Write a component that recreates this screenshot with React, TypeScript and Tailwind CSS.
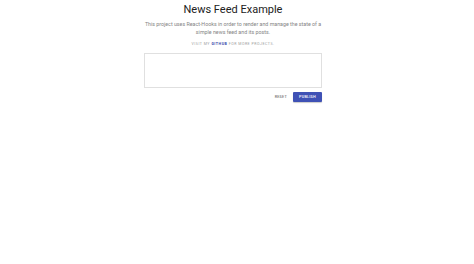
import React from 'react';

export default function App() {
  return (
    <div
      className="min-h-screen w-full bg-white pr-[8px]"
      style={{ fontFamily: 'Roboto, "Liberation Sans", sans-serif' }}
    >
      <div className="mx-auto flex w-[178px] flex-col items-center pt-[3px]">
        <h1 className="text-[11px] leading-[14px] font-normal text-[#212121]">
          News Feed Example
        </h1>
        <p className="mt-[2.5px] w-[180px] text-center text-[5.3px] leading-[8px] text-[#858585]">
          This project uses React-Hooks in order to render and manage the state of a simple news
          feed and its posts.
        </p>
        <p className="mt-[6px] text-[3.6px] leading-[5px] uppercase tracking-[0.5px] text-[#a0a0a0]">
          Visit my <span className="font-bold text-[#3949ab]">GitHub</span> for more projects.
        </p>
        <textarea className="mt-[6.5px] h-[35px] w-full resize-none border border-[#e0e0e0] outline-none" />
        <div className="mt-[4px] flex w-full items-center justify-end gap-[4px]">
          <button className="h-[10px] px-[2px] text-[3.8px] font-medium uppercase tracking-[0.2px] text-[#757575]">
            Reset
          </button>
          <button className="h-[10px] w-[29px] rounded-[1px] bg-[#3f51b5] text-[3.8px] font-medium uppercase tracking-[0.2px] text-white shadow-[0_1px_1px_rgba(0,0,0,0.2)]">
            Publish
          </button>
        </div>
      </div>
    </div>
  );
}
